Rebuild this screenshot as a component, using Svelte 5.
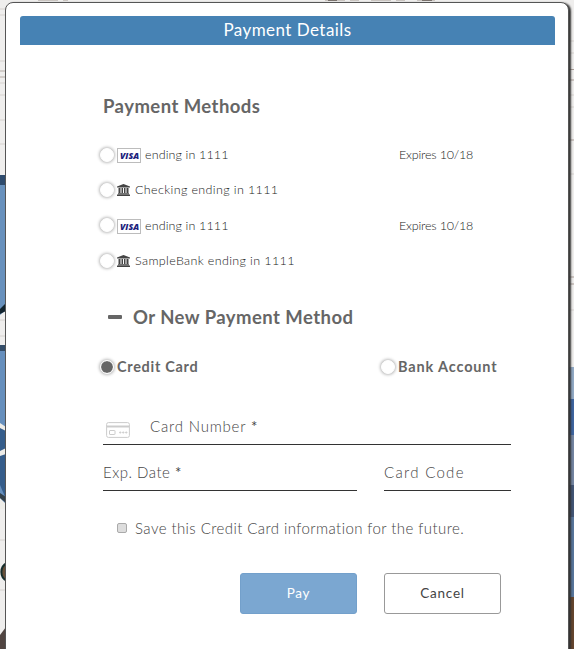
<script>
  let selected = $state('card');
  let save = $state(false);
  const methods = [
    { id: 'm1', kind: 'visa', label: 'ending in 1111', expires: 'Expires 10/18' },
    { id: 'm2', kind: 'bank', label: 'Checking ending in 1111' },
    { id: 'm3', kind: 'visa', label: 'ending in 1111', expires: 'Expires 10/18' },
    { id: 'm4', kind: 'bank', label: 'SampleBank ending in 1111' }
  ];
</script>

<div class="page">
  <svg class="backdrop" width="574" height="649" aria-hidden="true">
    <rect width="574" height="649" fill="#efeeed" />
    <path d="M0 9h6M0 15h6M0 61h6M0 83h6M0 95h6M0 120h6M0 144h6M0 320h6M0 336h6M0 540h6M0 590h6" stroke="#d6d2cf" />
    <path d="M0 71h6M0 77h6" stroke="#b5aca6" />
    <path d="M325 .5h110M38 .5h30" stroke="#c9c4c0" stroke-dasharray="20 5 9 12" />
    <path d="M328 .5h9M422 .5h10" stroke="#7a726d" />
    <path d="M0 175h6v135l-6 5z" fill="#6891bd" />
    <path d="M0 175h6v10H0z" fill="#2e4b6d" />
    <path d="M0 309l6-6v8l-6 3z" fill="#12242e" />
    <path d="M0 345h6v161H0z" fill="#668fbd" />
    <path d="M0 345h6v6H0z" fill="#344d68" />
    <path d="M0 427h6v72l-6-14z" fill="#355d8b" />
    <path d="M0 423l6 4v4l-6-3zM0 451l6-3v6l-6 2zM0 498l6 6v5H0z" fill="#edece8" />
    <path d="M0 493l6 4v6l-6-5z" fill="#34414a" />
    <path d="M7 563a10 10 0 0 0 0 18" fill="#685039" stroke="#172e2d" stroke-width="2" />
    <path d="M0 635l6-8v22H0z" fill="#514541" />
    <path d="M568 41h6M568 53h6M568 95h6M568 107h6M568 174h6M568 310h6" stroke="#d6d2cf" />
    <path d="M568 69.500h6M568 80h6M568 140h6M568 277h6M568 284h6" stroke="#a99c95" />
    <path d="M568 367h6v32h-6z" fill="#91a9c4" />
    <path d="M568 399h6v36h-6z" fill="#3e65a0" />
    <path d="M568 435h6v50h-6z" fill="#7384a1" />
    <path d="M568 485h6v32h-6z" fill="#425575" />
    <path d="M568 517h6v80h-6z" fill="#57759b" />
    <path d="M568 597h6v52h-6z" fill="#65452e" />
  </svg>

  <section class="modal">
    <header>Payment Details</header>
    <div class="body">
      <h2>Payment Methods</h2>
      <div class="methods">
        {#each methods as m (m.id)}
          <label class="method">
            <input type="radio" bind:group={selected} value={m.id} />
            {#if m.kind === 'visa'}
              <svg class="visa" width="24" height="15" viewBox="0 0 24 15">
                <rect x=".5" y=".5" width="23" height="14" fill="#fff" stroke="#bcbcbc" />
                <text x="3" y="10.500" textLength="19" lengthAdjust="spacingAndGlyphs">VISA</text>
              </svg>
            {:else}
              <svg class="bank" width="13" height="12" viewBox="0 0 13 12" fill="#444">
                <path d="M6.500 0L13 2.500v1H0v-1zM1.500 4h2v5h-2zM4.500 4h1.500v5H4.500zM7 4h1.500v5H7zM9.500 4h2v5h-2zM1 9.200h11v1H1zM0 10.600h13V12H0z" />
              </svg>
            {/if}
            <span class="name {m.kind}-name">{m.label}</span>
            {#if m.expires}<span class="expires">{m.expires}</span>{/if}
          </label>
        {/each}
      </div>

      <h2 class="new"><i class="minus"></i><span>Or New Payment Method</span></h2>

      <div class="types">
        <label><input type="radio" bind:group={selected} value="card" /><span>Credit Card</span></label>
        <label><input type="radio" bind:group={selected} value="account" /><span class="account">Bank Account</span></label>
      </div>

      <div class="field number">
        <svg width="24" height="16" viewBox="0 0 24 16" fill="none" stroke="#ccc">
          <rect x=".6" y=".6" width="22.800" height="14.800" rx="1.800" />
          <path d="M1 4.500h22" stroke-width="2" />
          <rect x="3.500" y="8.500" width="5.500" height="4" rx=".5" />
          <path d="M13 10.500h2.500M16 10.500h2.500M19 10.500h2.500M14.250 9.300v2.400M17.250 9.300v2.400M20.250 9.300v2.400" stroke-width=".8" />
        </svg>
        <span>Card Number <b>*</b></span>
      </div>
      <div class="pair">
        <div class="field exp"><span>Exp. Date <b>*</b></span></div>
        <div class="field code"><span>Card Code</span></div>
      </div>

      <label class="save">
        <input type="checkbox" bind:checked={save} />
        <span>Save this Credit Card information for the future.</span>
      </label>

      <div class="actions">
        <button class="pay">Pay</button>
        <button class="cancel">Cancel</button>
      </div>
    </div>
  </section>
</div>

<style>
  .page {
    position: relative;
    box-sizing: border-box;
    width: 574px;
    height: 649px;
    padding: 2px 4px 0 5px;
    overflow: hidden;
    font-family: 'Century Gothic', Lato, sans-serif;
    color: #666;
  }
  .backdrop { position: absolute; inset: 0; }
  .modal {
    position: relative;
    box-sizing: border-box;
    width: 564px;
    height: 670px;
    padding: 13px 13px 0 14px;
    background: #fff;
    border: 1px solid #555;
    border-radius: 8px;
    box-shadow: 2px 1px 2px #333;
  }
  header {
    height: 29px;
    border-radius: 3px 3px 0 0;
    background: #4682b4;
    color: #fff;
    font-size: 17px;
    line-height: 28px;
    letter-spacing: .45px;
    text-align: center;
  }
  .body { padding: 46px 44px 0 83px; }
  h2 {
    margin: 0;
    height: 30px;
    font-size: 18.5px;
    line-height: 30px;
    font-weight: 700;
    letter-spacing: .45px;
    white-space: nowrap;
  }
  .methods { margin-top: 16px; }
  .method {
    display: flex;
    align-items: center;
    height: 35.3px;
    margin-left: -5px;
    color: #222;
    font-size: 12.5px;
    font-weight: 300;
    white-space: nowrap;
  }
  input[type='radio'] {
    appearance: none;
    box-sizing: border-box;
    flex: none;
    width: 14px;
    height: 14px;
    margin: 0 4px 0 2px;
    border: 1px solid #fff;
    border-radius: 50%;
    background: #fff;
    box-shadow: 0 0 3px 1px #bbb;
  }
  .method input[type='radio'] { margin-right: 3px; }
  .types input[type='radio'] { margin-right: 3px; }
  input[type='radio']:checked { background: #666; background-clip: padding-box; }
  .visa { margin: 2px 4px 0 0; flex: none; }
  .visa text { font: italic 800 8.500px 'Open Sans', sans-serif; fill: #20207c; }
  .bank { margin: 0 5px 0 0; flex: none; }
  .visa-name { letter-spacing: .13px; }
  .bank-name { letter-spacing: .37px; }
  .expires { margin-left: auto; width: 112px; letter-spacing: -.18px; }
  .new { display: flex; align-items: center; margin-top: 24px; }
  .minus { width: 14px; height: 4px; margin: 0 11px 0 5px; border-radius: 1px; background: #666; }
  .types {
    display: flex;
    width: 400px;
    margin: 25px 0 0 -5px;
    height: 20px;
    font-size: 14.5px;
    font-weight: 700;
    letter-spacing: .7px;
  }
  .types label { display: flex; align-items: center; width: 281px; flex: none; white-space: nowrap; }
  .types label + label { width: 119px; letter-spacing: .85px; }
  .types span { margin-top: -1px; }
  .field {
    box-sizing: border-box;
    display: flex;
    align-items: center;
    border-bottom: 1px solid #333;
    color: #444;
    font-size: 15px;
    letter-spacing: .5px;
    font-weight: 300;
    white-space: nowrap;
  }
  .field b { font-weight: 400; }
  .number { height: 35px; margin-top: 33px; width: 408px; padding-left: 3px; letter-spacing: .8px; }
  .number svg { margin: 5px 20px 0 0; }
  .number span { margin-top: -2px; }
  .pair { display: flex; gap: 27px; width: 408px; margin-top: 11px; }
  .exp { width: 254px; height: 35px; }
  .code { width: 127px; height: 35px; letter-spacing: 1.3px; }
  .pair span { margin-top: -2px; }
  .save {
    display: flex;
    align-items: center;
    height: 20px;
    margin: 28px 0 0 14px;
    color: #444;
    font-size: 15px;
    font-weight: 300;
    letter-spacing: .42px;
    white-space: nowrap;
  }
  .save input {
    appearance: none;
    box-sizing: border-box;
    width: 10px;
    height: 10px;
    margin: 0 8px 2px 0;
    border: 1px solid #aaa;
    border-radius: 2px;
    background: #ddd;
  }
  .save span { margin-top: -2px; }
  .actions { display: flex; gap: 27px; margin: 34px 0 0 137px; }
  button {
    box-sizing: border-box;
    flex: none;
    width: 117px;
    height: 41px;
    padding: 0 0 1px;
    border: 1px solid #999;
    border-radius: 3px;
    background: #fff;
    color: #444;
    font: 13.5px 'Century Gothic', Lato, sans-serif;
    letter-spacing: .75px;
  }
  .pay { background: #7ba7d1; border-color: #73a0cb; color: #fff; }
</style>
